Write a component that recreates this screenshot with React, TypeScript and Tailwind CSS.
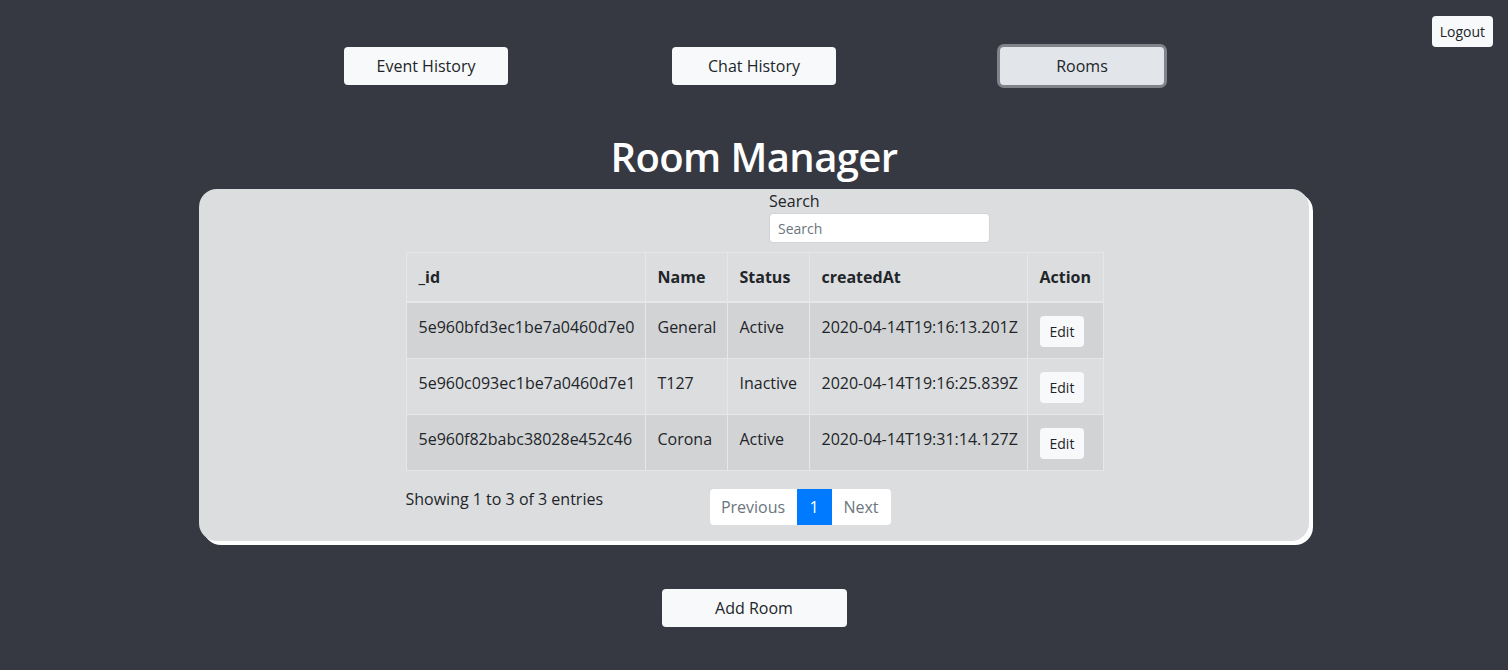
import React from "react";

type Room = {
  _id: string;
  name: string;
  status: string;
  createdAt: string;
};

const rooms: Room[] = [
  { _id: "5e960bfd3ec1be7a0460d7e0", name: "General", status: "Active", createdAt: "2020-04-14T19:16:13.201Z" },
  { _id: "5e960c093ec1be7a0460d7e1", name: "T127", status: "Inactive", createdAt: "2020-04-14T19:16:25.839Z" },
  { _id: "5e960f82babc38028e452c46", name: "Corona", status: "Active", createdAt: "2020-04-14T19:31:14.127Z" },
];

const navItems = ["Event History", "Chat History", "Rooms"];

const App = () => {
  const active = "Rooms";

  return (
    <div className="min-h-screen bg-[#363942] pb-10 font-['Open_Sans',sans-serif] text-[#212529]">
      <div className="flex justify-end pt-4 pr-[15px]">
        <button className="h-[31px] rounded bg-[#f8f9fa] px-2 text-sm">Logout</button>
      </div>

      <nav className="mx-auto grid w-[984px] grid-cols-3 justify-items-center">
        {navItems.map((item) => (
          <button
            key={item}
            className={
              item === active
                ? "h-[38px] w-[164px] rounded bg-[#e2e6ea] text-base ring-3 ring-[#80838a]"
                : "h-[38px] w-[164px] rounded bg-[#f8f9fa] text-base"
            }
          >
            {item}
          </button>
        ))}
      </nav>

      <h1 className="mt-12 mb-2 text-center text-[40px] leading-[48px] font-semibold tracking-[-0.6px] text-white">
        Room Manager
      </h1>

      <div className="mx-auto w-[1110px] rounded-[18px] bg-[#dcdddf] pb-4 shadow-[4px_4px_0_#ffffff]">
        <div className="ml-[570px] flex w-[221px] flex-col">
          <label className="text-base leading-6">Search</label>
          <input
            placeholder="Search"
            className="h-[30px] rounded border border-[#ced4da] bg-white px-2 text-sm placeholder:text-[#6c757d]"
          />
        </div>

        <div className="mx-auto mt-[9px] w-[697px]">
          <table className="w-full table-fixed border-collapse text-left text-base">
            <colgroup>
              <col className="w-[239px]" />
              <col className="w-[82px]" />
              <col className="w-[82px]" />
              <col className="w-[218px]" />
              <col className="w-[76px]" />
            </colgroup>
            <thead>
              <tr className="border-b-2 border-[#e6e7e9]">
                {["_id", "Name", "Status", "createdAt", "Action"].map((h) => (
                  <th key={h} className="border border-[#e6e7e9] px-3 py-3 align-top leading-6 font-bold whitespace-nowrap">
                    {h}
                  </th>
                ))}
              </tr>
            </thead>
            <tbody>
              {rooms.map((room, i) => (
                <tr key={room._id} className={i % 2 === 0 ? "bg-[#d2d3d5]" : "bg-[#dcdddf]"}>
                  <td className="border border-[#e6e7e9] px-3 py-3 align-top leading-6 whitespace-nowrap">{room._id}</td>
                  <td className="border border-[#e6e7e9] px-3 py-3 align-top leading-6 whitespace-nowrap">{room.name}</td>
                  <td className="border border-[#e6e7e9] px-3 py-3 align-top leading-6 whitespace-nowrap">{room.status}</td>
                  <td className="border border-[#e6e7e9] px-3 py-3 align-top leading-6 whitespace-nowrap">{room.createdAt}</td>
                  <td className="border border-[#e6e7e9] px-3 pt-[13px] pb-[11px] align-top">
                    <button className="block h-[31px] rounded bg-[#f8f9fa] px-[10px] text-sm">Edit</button>
                  </td>
                </tr>
              ))}
            </tbody>
          </table>

          <div className="mt-4 flex items-start">
            <div className="w-[304px] leading-6">Showing 1 to 3 of 3 entries</div>
            <div className="mt-[2px] flex h-9 overflow-hidden rounded text-base">
              <span className="flex w-[87px] items-center justify-center bg-white text-[#6c757d]">Previous</span>
              <span className="flex w-[35px] items-center justify-center bg-[#007bff] text-white">1</span>
              <span className="flex w-[59px] items-center justify-center bg-white text-[#6c757d]">Next</span>
            </div>
          </div>
        </div>
      </div>

      <div className="mt-12 flex justify-center">
        <button className="h-[38px] w-[185px] rounded bg-[#f8f9fa] text-base">Add Room</button>
      </div>
    </div>
  );
};

export default App;
